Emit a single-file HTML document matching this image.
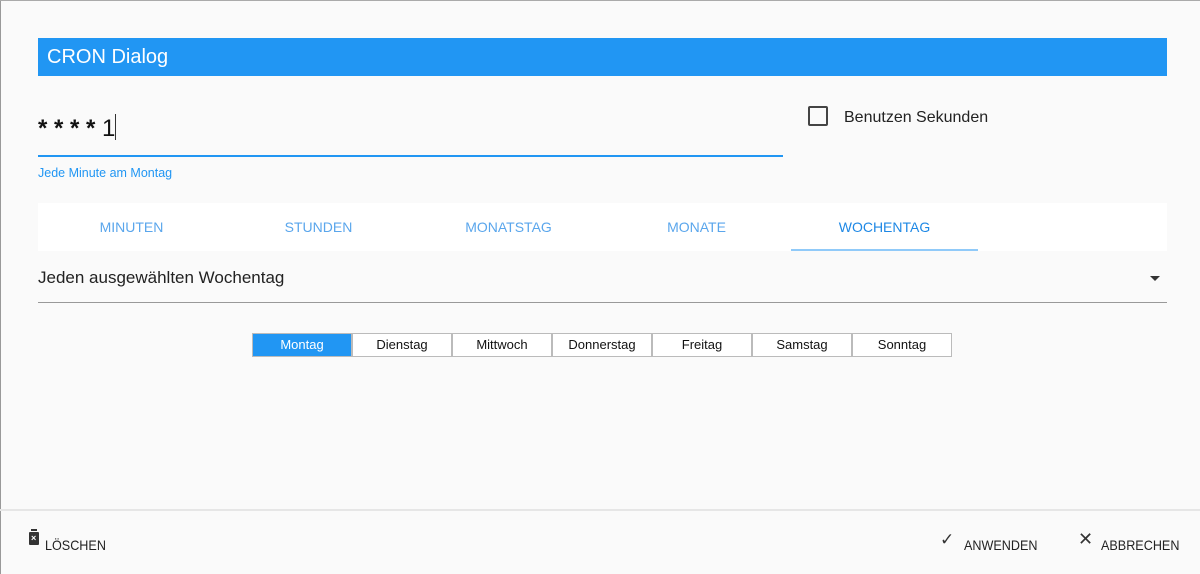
<!DOCTYPE html>
<html><head><style>
body{margin:0;width:1200px;height:574px;background:#fafafa;font-family:"Liberation Sans",sans-serif;position:relative;overflow:hidden}
.a{position:absolute}
.tab{position:absolute;top:203px;height:48px;line-height:48px;font-size:14px;color:#5aa6ec;text-align:center;width:187px}
.d{position:absolute;top:333px;height:22px;width:98px;border:1px solid #bbb;background:#fff;font-size:13px;line-height:22px;text-align:center;color:#111}
</style></head><body>
<div class="a" style="left:0;top:0;width:1px;height:574px;background:#999"></div>
<div class="a" style="left:0;top:0;width:1200px;height:1px;background:#aaa"></div>
<div class="a" style="left:38px;top:38px;width:1129px;height:38px;background:#2196f3;color:#fff;font-size:20px;line-height:39px;"><span style="margin-left:9px">CRON Dialog</span></div>
<div class="a" style="left:38px;top:114px;font-size:24px;color:#111"><b>* * * *</b> 1<span style="display:inline-block;width:1px;height:26px;background:#333;vertical-align:-4px"></span></div>
<div class="a" style="left:38px;top:155px;width:745px;height:2px;background:#2196f3"></div>
<div class="a" style="left:38px;top:166px;font-size:12.5px;color:#2196f3">Jede Minute am Montag</div>
<div class="a" style="left:808px;top:106px;width:16px;height:16px;border:2px solid #444;border-radius:2px"></div>
<div class="a" style="left:844px;top:109px;font-size:16px;color:#222">Benutzen Sekunden</div>
<div class="a" style="left:38px;top:203px;width:1129px;height:48px;background:#fff"></div>
<div class="tab" style="left:38px">MINUTEN</div>
<div class="tab" style="left:225px">STUNDEN</div>
<div class="tab" style="left:415px">MONATSTAG</div>
<div class="tab" style="left:603px">MONATE</div>
<div class="tab" style="left:791px;color:#1e88e5">WOCHENTAG</div>
<div class="a" style="left:791px;top:249px;width:187px;height:2px;background:#90caf9"></div>
<div class="a" style="left:38px;top:268px;font-size:17px;color:#222">Jeden ausgewählten Wochentag</div>
<div class="a" style="left:1150px;top:276px;width:0;height:0;border-left:5px solid transparent;border-right:5px solid transparent;border-top:5px solid #333"></div>
<div class="a" style="left:38px;top:302px;width:1129px;height:1px;background:#999"></div>
<div class="d" style="left:252px;background:#2196f3;color:#fff;border-color:#bbb">Montag</div>
<div class="d" style="left:352px">Dienstag</div>
<div class="d" style="left:452px">Mittwoch</div>
<div class="d" style="left:552px">Donnerstag</div>
<div class="d" style="left:652px">Freitag</div>
<div class="d" style="left:752px">Samstag</div>
<div class="d" style="left:852px">Sonntag</div>
<div class="a" style="left:0;top:509px;width:1200px;height:2px;background:#e6e6e6"></div>
<div class="a" style="left:29px;top:532px;width:10px;height:13px;background:#333;border-radius:1px"></div>
<div class="a" style="left:31px;top:529px;width:6px;height:2px;background:#333"></div>
<div class="a" style="left:31px;top:533px;color:#fff;font-size:9px;font-weight:bold;line-height:10px">×</div>
<div class="a" style="left:45px;top:537px;font-size:14px;color:#222;transform:scaleX(0.9);transform-origin:left">LÖSCHEN</div>
<div class="a" style="left:940px;top:530px;font-size:17px;color:#333">✓</div>
<div class="a" style="left:964px;top:537px;font-size:14px;color:#222;transform:scaleX(0.9);transform-origin:left">ANWENDEN</div>
<div class="a" style="left:1078px;top:529px;font-size:18px;color:#333">✕</div>
<div class="a" style="left:1101px;top:537px;font-size:14px;color:#222;transform:scaleX(0.9);transform-origin:left">ABBRECHEN</div>
</body></html>
